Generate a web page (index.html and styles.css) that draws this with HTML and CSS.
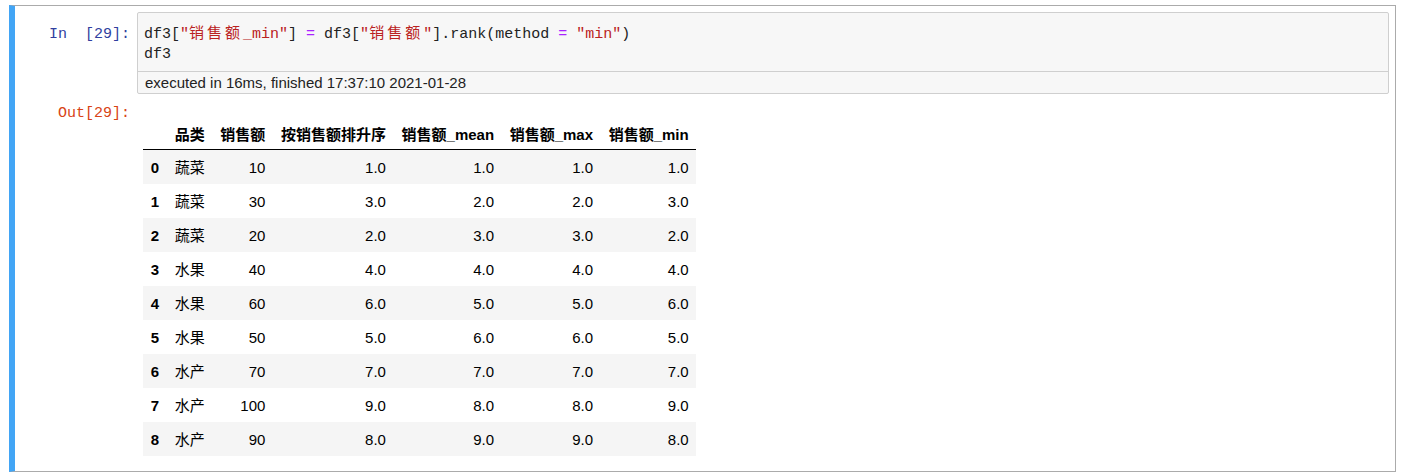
FILE: index.html
```html
<!DOCTYPE html>
<html lang="zh">
<head>
    <meta charset="UTF-8">
    <meta name="viewport" content="width=device-width, initial-scale=1.0">
    <title>Notebook cell</title>
    <link rel="stylesheet" href="styles.css">
</head>
<body>
    <div class="cell selected">
        <div class="input">
            <div class="prompt in-prompt">In  [29]:</div>
            <div class="input-area">
                <div class="code">
                    <div class="line">df3[<span class="str">"</span><span class="str zh">销售额</span><span class="str">_min"</span>] <span class="op">=</span> df3[<span class="str">"</span><span class="str zh">销售额</span><span class="str">"</span>].rank(method <span class="op">=</span> <span class="str">"min"</span>)</div>
                    <div class="line">df3</div>
                </div>
                <div class="timing">executed in 16ms, finished 17:37:10 2021-01-28</div>
            </div>
        </div>

        <div class="output">
            <div class="prompt out-prompt">Out[29]:</div>
            <div class="output-sub">
                <table class="dataframe">
                    <thead>
                        <tr>
                            <th></th>
                            <th>品类</th>
                            <th>销售额</th>
                            <th>按销售额排升序</th>
                            <th>销售额_mean</th>
                            <th>销售额_max</th>
                            <th>销售额_min</th>
                        </tr>
                    </thead>
                    <tbody>
                        <tr><th>0</th><td>蔬菜</td><td>10</td><td>1.0</td><td>1.0</td><td>1.0</td><td>1.0</td></tr>
                        <tr><th>1</th><td>蔬菜</td><td>30</td><td>3.0</td><td>2.0</td><td>2.0</td><td>3.0</td></tr>
                        <tr><th>2</th><td>蔬菜</td><td>20</td><td>2.0</td><td>3.0</td><td>3.0</td><td>2.0</td></tr>
                        <tr><th>3</th><td>水果</td><td>40</td><td>4.0</td><td>4.0</td><td>4.0</td><td>4.0</td></tr>
                        <tr><th>4</th><td>水果</td><td>60</td><td>6.0</td><td>5.0</td><td>5.0</td><td>6.0</td></tr>
                        <tr><th>5</th><td>水果</td><td>50</td><td>5.0</td><td>6.0</td><td>6.0</td><td>5.0</td></tr>
                        <tr><th>6</th><td>水产</td><td>70</td><td>7.0</td><td>7.0</td><td>7.0</td><td>7.0</td></tr>
                        <tr><th>7</th><td>水产</td><td>100</td><td>9.0</td><td>8.0</td><td>8.0</td><td>9.0</td></tr>
                        <tr><th>8</th><td>水产</td><td>90</td><td>8.0</td><td>9.0</td><td>9.0</td><td>8.0</td></tr>
                    </tbody>
                </table>
            </div>
        </div>
    </div>
</body>
</html>
```

FILE: styles.css
```css
body {
    margin: 0;
    background-color: #fff;
    font-family: "Liberation Sans", "Noto Sans CJK SC", sans-serif;
    font-size: 15px;
    color: #000;
}
.cell {
    margin: 5px 8px 0 9px;
    padding: 6px 6px 0 0;
    border: 1px solid #ababab;
    border-left: 6px solid #42a5f5;
}
.input, .output {
    display: flex;
    align-items: flex-start;
}
.prompt {
    flex: 0 0 122px;
    box-sizing: border-box;
    padding-right: 7px;
    text-align: right;
    white-space: pre;
    font-family: "Liberation Mono", "Noto Sans CJK SC", monospace;
    font-size: 15px;
    line-height: 20px;
}
.in-prompt {
    padding-top: 13px;
    color: #303f9f;
}
.out-prompt {
    padding-top: 10px;
    color: #d84315;
}
.input-area {
    flex: 1;
    border: 1px solid #cfcfcf;
    border-radius: 2px;
    background-color: #f7f7f7;
}
.code {
    padding: 12px 6px 6px;
    font-family: "Liberation Mono", "Noto Sans CJK SC", monospace;
    font-size: 15px;
    color: #222;
}
.code .line {
    height: 20px;
    line-height: 20px;
    white-space: pre;
    overflow: hidden;
}
.code .str {
    color: #ba2121;
}
.code .op {
    color: #aa22ff;
}
.code .zh {
    letter-spacing: 3px;
}
.timing {
    padding: 0 7px;
    border-top: 1px solid #cfcfcf;
    line-height: 21px;
    color: #222;
}
.output-sub {
    flex: 1;
    padding: 23px 0 15px 6px;
}
.dataframe {
    border-collapse: collapse;
    border: none;
}
.dataframe thead {
    border-bottom: 1px solid #000;
}
.dataframe th, .dataframe td {
    padding: 7.5px 7.8px;
    line-height: 19px;
    text-align: right;
    vertical-align: middle;
    white-space: nowrap;
}
.dataframe thead th {
    padding: 8px 7.8px 5px;
    vertical-align: bottom;
}
.dataframe th {
    font-weight: bold;
}
.dataframe tbody tr:nth-child(odd) {
    background-color: #f5f5f5;
}
```
